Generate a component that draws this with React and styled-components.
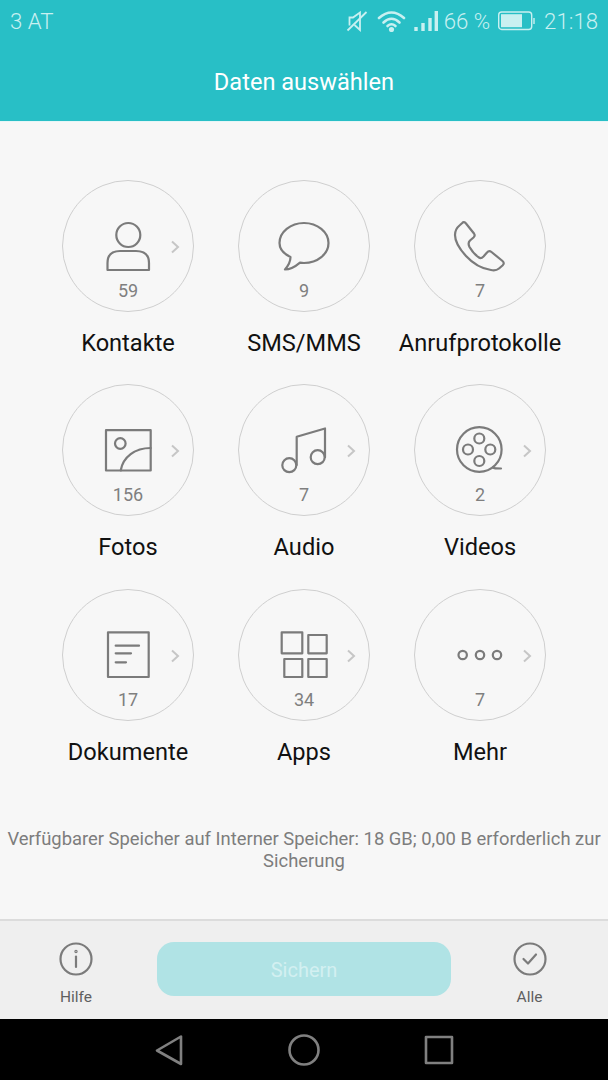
import React from "react";
import styled, { createGlobalStyle } from "styled-components";

const Global = createGlobalStyle`
  html, body { margin: 0; padding: 0; background: #000; }
  #root { width: 608px; height: 1080px; }
`;

const Page = styled.div`
  width: 608px;
  height: 1080px;
  display: flex;
  flex-direction: column;
  background: #f7f7f7;
  font-family: Roboto, "Liberation Sans", sans-serif;
  overflow: hidden;
`;

const Header = styled.header`
  height: 121px;
  flex: none;
  display: flex;
  flex-direction: column;
  background: #28bfc6;
  border-bottom: 1px solid #e6f6f7;
`;

const StatusBar = styled.div`
  height: 42px;
  padding: 0 10px 0 10px;
  display: flex;
  align-items: center;
  justify-content: space-between;
  color: #c9f0f1;
  font-size: 22.2px;
  font-weight: 300;
`;

const StatusRight = styled.div`
  display: flex;
  align-items: center;
`;

const StatusIcon = styled.svg`
  flex: none;
  margin-right: ${(p) => p.$gap}px;
  fill: none;
  stroke: #c9f0f1;
`;

const StatusText = styled.span`
  margin-right: ${(p) => p.$gap || 0}px;
  white-space: nowrap;
`;

const Title = styled.h1`
  margin: 0;
  flex: 1;
  display: flex;
  align-items: center;
  justify-content: center;
  padding-top: 1px;
  color: #fff;
  font-size: 23.6px;
  font-weight: 400;
`;

const Main = styled.main`
  flex: 1;
  display: flex;
  flex-direction: column;
  padding-top: 58px;
`;

const Grid = styled.div`
  display: grid;
  grid-template-columns: repeat(3, 176px);
  grid-auto-rows: 204.4px;
  justify-content: center;
`;

const Item = styled.div`
  display: flex;
  flex-direction: column;
  align-items: center;
`;

const Ring = styled.div`
  position: relative;
  box-sizing: border-box;
  width: 132px;
  height: 132px;
  padding-top: 35px;
  border: 1px solid #cfcfcf;
  border-radius: 50%;
  display: flex;
  flex-direction: column;
  align-items: center;
`;

const Glyph = styled.svg`
  flex: none;
  width: 60px;
  height: 60px;
  fill: none;
  stroke: #7b7b7b;
  stroke-width: 2.2;
  stroke-linejoin: round;
  stroke-linecap: round;
`;

const Count = styled.div`
  margin-top: 5px;
  color: #7f7f7f;
  font-size: 18px;
  line-height: 20px;
`;

const Chevron = styled.svg`
  position: absolute;
  left: 106px;
  top: 58px;
  fill: none;
  stroke: #c6c6c6;
  stroke-width: 2;
`;

const Label = styled.div`
  margin-top: 16px;
  color: #111;
  font-size: 23.6px;
  line-height: 30px;
  white-space: nowrap;
`;

const Note = styled.p`
  margin: 35px 0 0;
  padding: 0 4px;
  color: #7d7d7d;
  font-size: 18.4px;
  line-height: 22px;
  text-align: center;
`;

const Footer = styled.footer`
  box-sizing: border-box;
  height: 100px;
  flex: none;
  display: grid;
  grid-template-columns: 157px 294px 157px;
  border-top: 2px solid #dcdcdc;
  background: #efefef;
`;

const Side = styled.div`
  display: flex;
  flex-direction: column;
  align-items: center;
  padding-top: 20px;
  padding-right: ${(p) => p.$shift || 0}px;
  color: #5f5f5f;
  font-size: 15.5px;
  line-height: 18px;
`;

const SideIcon = styled.svg`
  width: 36px;
  height: 36px;
  margin-bottom: 11px;
  fill: none;
  stroke: #7b7b7b;
  stroke-width: 2.2;
  stroke-linecap: round;
  stroke-linejoin: round;
`;

const SaveButton = styled.button`
  align-self: start;
  margin-top: 21px;
  height: 54px;
  padding: 2px 0 0;
  border: 0;
  border-radius: 17px;
  background: #b0e3e5;
  color: #d3f0f1;
  font: 400 20px Roboto, sans-serif;
`;

const NavBar = styled.nav`
  height: 61px;
  flex: none;
  box-sizing: border-box;
  padding-left: 153px;
  background: #000;
  display: flex;
  align-items: center;
  gap: 101px;
`;

const NavIcon = styled.svg`
  display: block;
  fill: none;
  stroke: #808080;
  stroke-width: 2.6;
  stroke-linejoin: round;
`;

const person = (
  <>
    <circle cx="30.3" cy="19" r="12" />
    <path d="M9.5 54V47Q9.5 35 22 35H38Q51 35 51 47V54Z" />
  </>
);
const bubble = (
  <path d="M16.5 41C16.5 46 14 50 11 53.5C17 53.5 22 50 26 46.6C28 47 29 47 30 47C43.5 47 54.5 38 54.5 27C54.5 16 43.5 7 30 7C16.5 7 5.5 16 5.5 27C5.5 33 10 38 16.5 41Z" />
);
const phone = (
  <path d="M10 9L12 7.2Q14 5 16 7.5L24 17.5Q25.5 19.7 23.5 21.5L20 24.5Q17.5 27 19.5 31Q23.5 38 29 41.5Q31 43 33.5 40.5L37 36.5Q39 34 41.5 36L52.5 45Q55 47 52.5 49.5L49 52.5Q46 55 41 54Q27 52 16 40Q5 28 5 19Q5 13 10 9Z" />
);
const photo = (
  <>
    <rect x="8" y="10.2" width="44.7" height="40.3" />
    <circle cx="22.3" cy="23.5" r="5.3" />
    <path d="M22.7 50.5C25 37 37 28 52.7 28" />
  </>
);
const music = (
  <>
    <circle cx="15.3" cy="45.2" r="7" />
    <circle cx="43.7" cy="37.2" r="7" />
    <path d="M22.7 45V16.8L51 8.5V37.2" />
  </>
);
const reel = (
  <>
    <circle cx="29.3" cy="29.5" r="22.3" />
    <circle cx="29.3" cy="18.5" r="5" />
    <circle cx="18" cy="29.5" r="5" />
    <circle cx="40.3" cy="29.5" r="5" />
    <circle cx="29.3" cy="41" r="5" />
    <path d="M43 47.6Q44 48.5 51 48.5" />
  </>
);
const doc = (
  <>
    <rect x="10" y="7.3" width="40.7" height="44.7" />
    <path d="M17.7 20.7H41M17.7 28.3H33M17.7 37.3H28" />
  </>
);
const apps = (
  <>
    <rect x="7.7" y="7.3" width="20.6" height="21" />
    <rect x="34.3" y="10" width="18.4" height="18.3" />
    <rect x="10.3" y="34" width="18" height="18" />
    <rect x="34.3" y="34" width="18.4" height="18" />
  </>
);
const dots = (
  <>
    <circle cx="12.7" cy="30" r="4.2" />
    <circle cx="30" cy="30" r="4.2" />
    <circle cx="47" cy="30" r="4.2" />
  </>
);

const items = [
  { label: "Kontakte", count: 59, icon: person, more: true },
  { label: "SMS/MMS", count: 9, icon: bubble },
  { label: "Anrufprotokolle", count: 7, icon: phone },
  { label: "Fotos", count: 156, icon: photo, more: true },
  { label: "Audio", count: 7, icon: music, more: true },
  { label: "Videos", count: 2, icon: reel, more: true },
  { label: "Dokumente", count: 17, icon: doc, more: true },
  { label: "Apps", count: 34, icon: apps, more: true },
  { label: "Mehr", count: 7, icon: dots, more: true },
];

export default function App() {
  return (
    <Page>
      <Global />
      <Header>
        <StatusBar>
          <span>3 AT</span>
          <StatusRight>
            <StatusIcon $gap={9} width="22" height="22" viewBox="0 0 22 22" strokeWidth="1.8">
              <path d="M3.5 15.5V7.5H7L14 2.5V20L8.5 15" />
              <path d="M1.5 20.5L20.5 2" />
            </StatusIcon>
            <StatusIcon $gap={8} width="29" height="22" viewBox="0 0 29 22" strokeWidth="2.6" strokeLinecap="round">
              <path d="M2 8Q14.5-3 27 8" />
              <path d="M6.5 12.5Q14.5 5 22.5 12.5" />
              <path d="M10.5 16Q14.5 12.5 18.5 16" />
              <circle cx="14.5" cy="19.5" r="1.3" />
            </StatusIcon>
            <StatusIcon $gap={6} width="24" height="22" viewBox="0 0 24 22" strokeWidth="3.4">
              <path d="M2 21V17M9 21V13M16 21V8M22.3 21V1" />
            </StatusIcon>
            <StatusText $gap={8}>66 %</StatusText>
            <StatusIcon $gap={9} width="37" height="20" viewBox="0 0 37 20" strokeWidth="1.4">
              <rect x="0.7" y="1" width="33" height="17.5" rx="3" />
              <rect x="3" y="3.2" width="21" height="13" fill="#c9f0f1" stroke="none" />
              <path d="M36 7V13" />
            </StatusIcon>
            <StatusText>21:18</StatusText>
          </StatusRight>
        </StatusBar>
        <Title>Daten auswählen</Title>
      </Header>
      <Main>
        <Grid>
          {items.map((it) => (
            <Item key={it.label}>
              <Ring>
                <Glyph viewBox="0 0 60 60">{it.icon}</Glyph>
                <Count>{it.count}</Count>
                {it.more && (
                  <Chevron width="12" height="16" viewBox="0 0 12 16">
                    <path d="M3 2.5L9 8L3 13.5" />
                  </Chevron>
                )}
              </Ring>
              <Label>{it.label}</Label>
            </Item>
          ))}
        </Grid>
        <Note>Verfügbarer Speicher auf Interner Speicher: 18 GB; 0,00 B erforderlich zur Sicherung</Note>
      </Main>
      <Footer>
        <Side $shift={5}>
          <SideIcon viewBox="0 0 36 36">
            <circle cx="18" cy="18" r="15.5" />
            <path d="M18 15.5V26" />
            <circle cx="18" cy="10.5" r="0.6" />
          </SideIcon>
          Hilfe
        </Side>
        <SaveButton disabled>Sichern</SaveButton>
        <Side>
          <SideIcon viewBox="0 0 36 36">
            <circle cx="18" cy="18" r="15.5" />
            <path d="M11.5 18L16 22.5L24 13.5" />
          </SideIcon>
          Alle
        </Side>
      </Footer>
      <NavBar>
        <NavIcon width="32" height="36" viewBox="0 0 32 36">
          <path d="M28 4.5V32L4 18.5Z" />
        </NavIcon>
        <NavIcon width="36" height="36" viewBox="0 0 36 36">
          <circle cx="18" cy="18" r="14.5" />
        </NavIcon>
        <NavIcon width="32" height="32" viewBox="0 0 32 32">
          <rect x="3" y="3" width="26" height="26" />
        </NavIcon>
      </NavBar>
    </Page>
  );
}
